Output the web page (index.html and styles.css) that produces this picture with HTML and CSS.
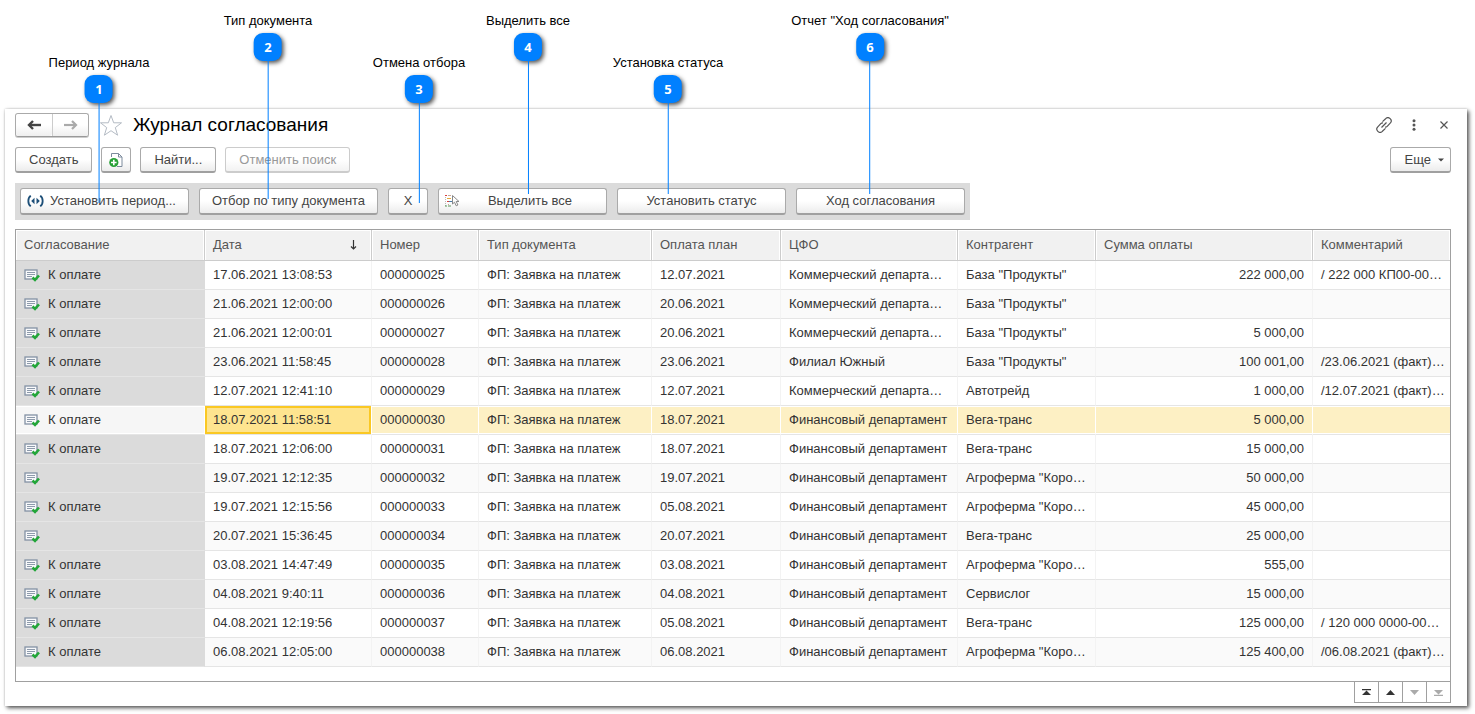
FILE: index.html
```html
<!DOCTYPE html>
<html lang="ru">
<head>
<meta charset="utf-8">
<title>Журнал согласования</title>
<link rel="stylesheet" href="styles.css">
</head>
<body>
<svg class="defs" aria-hidden="true">
  <symbol id="doc" viewBox="0 0 16 13">
    <rect x="1" y="1" width="12" height="9" fill="#f8f9fb" stroke="#8391a4" stroke-width="1.300"/>
    <path d="M3 3.500h8M3 5.500h8M3 7.500h5" stroke="#8d9aab"/>
    <path d="M8.500 8.500l2.500 2.400 4-4.400" fill="none" stroke="#22a638" stroke-width="2.600"/>
  </symbol>
</svg>

<main class="window">
  <header class="titlebar">
    <div class="history">
      <button type="button" aria-label="Назад"><svg width="14" height="10" viewBox="0 0 14 10"><path d="M2 5h12" stroke="#444" stroke-width="2.400"/><path d="M6 1L2 5l4 4" fill="none" stroke="#444" stroke-width="2.400"/></svg></button>
      <button type="button" aria-label="Вперед"><svg width="14" height="10" viewBox="0 0 14 10"><path d="M0 5h12" stroke="#aaa" stroke-width="2.200"/><path d="M8 1l4 4-4 4" fill="none" stroke="#aaa" stroke-width="2.200"/></svg></button>
    </div>
    <button type="button" class="plain star" aria-label="В избранное"><svg width="24" height="23" viewBox="0 0 24 23"><path d="M12 1.500l2.700 7.300h7.800l-6.200 4.800 2.300 7.600-6.600-4.500-6.600 4.500 2.300-7.600L1.500 8.800h7.800z" fill="#fff" stroke="#b4bbc4"/></svg></button>
    <h1>Журнал согласования</h1>
    <div class="tools">
      <button type="button" class="plain" aria-label="Ссылка"><svg width="16" height="16" viewBox="0 0 16 16"><g fill="none" stroke="#555" stroke-width="1.200"><path d="M6.500 4.600L9.600 1.700a3 3 0 0 1 4.600 4.500L11.200 9.300a2.800 2.800 0 0 1-2.200.8"/><path d="M9.500 11.400L6.400 14.300a3 3 0 0 1-4.600-4.500L4.800 6.700A2.800 2.800 0 0 1 7 5.900"/><path d="M5.500 10.500l5-5"/></g></svg></button>
      <button type="button" class="plain" aria-label="Меню"><svg width="4" height="12" viewBox="0 0 4 12"><g fill="#555"><circle cx="2" cy="1.800" r="1.500"/><circle cx="2" cy="6" r="1.500"/><circle cx="2" cy="10.200" r="1.500"/></g></svg></button>
      <button type="button" class="plain" aria-label="Закрыть"><svg width="8" height="8" viewBox="0 0 8 8"><path d="M0.500 0.500l7 7M7.500 0.500l-7 7" stroke="#555" stroke-width="1.200"/></svg></button>
    </div>
  </header>

  <div class="commands">
    <button type="button" class="btn">Создать</button>
    <button type="button" class="btn square" aria-label="Скопировать"><svg width="14" height="16" viewBox="0 0 14 16"><path d="M2.500 5V1.500h7l3.500 3.500v9.500H8" fill="#fff" stroke="#7d8b9d"/><path d="M9.500 1.500V5H13" fill="none" stroke="#7d8b9d"/><circle cx="4.800" cy="10.500" r="4.600" fill="#27a035"/><path d="M2 10.500h5.600M4.800 7.700v5.600" stroke="#fff" stroke-width="1.600"/></svg></button>
    <button type="button" class="btn">Найти...</button>
    <button type="button" class="btn" disabled>Отменить поиск</button>
    <button type="button" class="btn more">Еще <svg width="6" height="4" viewBox="0 0 6 4"><path d="M0 0.500h6L3 3.500z" fill="#444"/></svg></button>
  </div>

  <div class="filters">
    <button type="button" class="btn wide"><svg width="17" height="12" viewBox="0 0 17 12"><g fill="none" stroke="#1d4f78" stroke-width="1.800"><path d="M3.800 0.700C.5 3 .5 9 3.800 11.300M13.200 0.700c3.300 2.300 3.300 8.300 0 10.600"/></g><path d="M7.500 2.800v6.400L4.200 6zM9.500 2.800v6.400L12.800 6z" fill="#1d4f78"/></svg><span>Установить период...</span></button>
    <button type="button" class="btn type">Отбор по типу документа</button>
    <button type="button" class="btn reset">X</button>
    <button type="button" class="btn wide"><svg width="15" height="14" viewBox="0 0 15 14"><path d="M0 1.500h2" stroke="#d8403c"/><path d="M3 1.500h3M3 4.500h1M3 10.500h1" stroke="#c9a898"/><path d="M2 4.500h4" stroke="#e5a93a"/><path d="M0.500 3v9" stroke="#bbb" stroke-dasharray="1 1"/><path d="M2 7.500h2" stroke="#d8403c"/><path d="M4 7.500h3" stroke="#4a7ca8"/><path d="M0 12h2M3 12h3" stroke="#5c9a5c"/><path d="M7.500 1.500v8.500l2-1.800 1.700 3.600 1.700-.8-1.700-3.500H14z" fill="#fff" stroke="#888"/></svg><span>Выделить все</span></button>
    <button type="button" class="btn wide">Установить статус</button>
    <button type="button" class="btn wide">Ход согласования</button>
  </div>

  <div class="grid">
    <table>
      <colgroup><col class="c-state"><col class="c-date"><col class="c-num"><col class="c-type"><col class="c-plan"><col class="c-cfo"><col class="c-agent"><col class="c-sum"><col></colgroup>
      <thead>
        <tr><th>Согласование</th><th><div class="sorted">Дата<svg width="7" height="10" viewBox="0 0 7 10"><path d="M3.500 0v9M1 6.500l2.500 2.500L6 6.500" fill="none" stroke="#333" stroke-width="1.200"/></svg></div></th><th>Номер</th><th>Тип документа</th><th>Оплата план</th><th>ЦФО</th><th>Контрагент</th><th>Сумма оплаты</th><th>Комментарий</th></tr>
      </thead>
      <tbody id="rows"></tbody>
    </table>
  </div>
  <nav class="pager" aria-label="Прокрутка">
    <button type="button" aria-label="В начало"><svg width="9" height="7" viewBox="0 0 9 7"><path d="M0 0h9v1.300H0zM4.500 1.500L9 6H0z" fill="#333"/></svg></button>
    <button type="button" aria-label="Вверх"><svg width="9" height="7" viewBox="0 0 9 7"><path d="M4.500 1L9 6H0z" fill="#333"/></svg></button>
    <button type="button" disabled aria-label="Вниз"><svg width="9" height="7" viewBox="0 0 9 7"><path d="M4.500 6L9 1H0z" fill="#aaa"/></svg></button>
    <button type="button" disabled aria-label="В конец"><svg width="9" height="7" viewBox="0 0 9 7"><path d="M0 5.700h9V7H0zM4.500 5.500L9 1H0z" fill="#aaa"/></svg></button>
  </nav>
</main>

<div class="callout low n1"><span>Период журнала</span><b>1</b><i></i></div>
<div class="callout high n2"><span>Тип документа</span><b>2</b><i></i></div>
<div class="callout low n3"><span>Отмена отбора</span><b>3</b><i></i></div>
<div class="callout high n4"><span>Выделить все</span><b>4</b><i></i></div>
<div class="callout low n5"><span>Установка статуса</span><b>5</b><i></i></div>
<div class="callout high n6"><span>Отчет "Ход согласования"</span><b>6</b><i></i></div>
<script src="rows.js"></script>
</body>
</html>
```
FILE: rows.js
```js
const pay = 'К оплате', com = 'Коммерческий департа…', fin = 'Финансовый департамент';
const base = 'База "Продукты"', agro = 'Агроферма "Коро…', vega = 'Вега-транс';
const rows = [
  [pay, '17.06.2021 13:08:53', '25', '12.07.2021', com, base, '222 000,00', '/ 222 000 КП00-00…'],
  [pay, '21.06.2021 12:00:00', '26', '20.06.2021', com, base, '', ''],
  [pay, '21.06.2021 12:00:01', '27', '20.06.2021', com, base, '5 000,00', ''],
  [pay, '23.06.2021 11:58:45', '28', '23.06.2021', 'Филиал Южный', base, '100 001,00', '/23.06.2021 (факт)…'],
  [pay, '12.07.2021 12:41:10', '29', '12.07.2021', com, 'Автотрейд', '1 000,00', '/12.07.2021 (факт)…'],
  [pay, '18.07.2021 11:58:51', '30', '18.07.2021', fin, vega, '5 000,00', ''],
  [pay, '18.07.2021 12:06:00', '31', '18.07.2021', fin, vega, '15 000,00', ''],
  ['', '19.07.2021 12:12:35', '32', '19.07.2021', fin, agro, '50 000,00', ''],
  [pay, '19.07.2021 12:15:56', '33', '05.08.2021', fin, agro, '45 000,00', ''],
  ['', '20.07.2021 15:36:45', '34', '20.07.2021', fin, vega, '25 000,00', ''],
  [pay, '03.08.2021 14:47:49', '35', '03.08.2021', fin, agro, '555,00', ''],
  [pay, '04.08.2021 9:40:11', '36', '04.08.2021', fin, 'Сервислог', '15 000,00', ''],
  [pay, '04.08.2021 12:19:56', '37', '05.08.2021', fin, vega, '125 000,00', '/ 120 000 0000-00…'],
  [pay, '06.08.2021 12:05:00', '38', '06.08.2021', fin, agro, '125 400,00', '/06.08.2021 (факт)…']
];
document.getElementById('rows').innerHTML = rows.map(([state, date, num, plan, cfo, agent, sum, note]) =>
  `<tr${num === '30' ? ' class="current"' : ''}><td class="state"><svg width="16" height="13"><use href="#doc"/></svg>${state}</td>` +
  `<td class="date">${date}</td><td>0000000${num}</td><td>ФП: Заявка на платеж</td><td>${plan}</td>` +
  `<td>${cfo}</td><td>${agent}</td><td class="sum">${sum}</td><td>${note}</td></tr>`
).join('');
```
FILE: styles.css
```css
* { box-sizing: border-box; }
body {
  margin: 0;
  padding: 109px 8px 8px 5px;
  background: #fff;
  color: #333;
  font: 13px/16px "Liberation Sans", Arial, sans-serif;
}
button { font: inherit; color: #444; margin: 0; padding: 0; }
svg { flex: none; }
.defs { position: absolute; width: 0; height: 0; }

.window {
  padding: 4px 16px 3px 10px;
  background: #fff;
  box-shadow: 2px 2px 4px #555, 0 0 2px #ccc;
}
.titlebar { display: flex; align-items: center; height: 24px; }
.history { display: flex; border: 1px solid #aaa; border-bottom-color: #999; border-radius: 3px; box-shadow: 0 1px 0 #ccc; }
.history button {
  display: flex; align-items: center; justify-content: center;
  width: 36px; height: 22px; border: 0; border-radius: 3px;
  background: linear-gradient(#fff 50%, #eee);
}
.history button + button { border-left: 1px solid #ccc; border-radius: 0 3px 3px 0; }
.plain { display: flex; align-items: center; justify-content: center; border: 0; background: none; }
.star { margin: 0 10px; }
h1 { margin: 0; font-size: 19px; line-height: 24px; font-weight: 400; color: #000; }
.tools { display: flex; margin-left: auto; margin-right: -8px; }
.tools button { width: 30px; height: 24px; }

.commands { display: flex; gap: 9px; margin-top: 10px; }
.btn {
  display: flex; align-items: center; justify-content: center;
  height: 26px; padding: 0 13px;
  border: 1px solid #aaa; border-bottom: 2px solid #a0a0a0; border-radius: 3px;
  background: linear-gradient(#fff 50%, #ececec);
  white-space: nowrap;
}
.btn:disabled { color: #999; border-color: #ccc; background: linear-gradient(#fff 50%, #f2f2f2); }
.square { width: 30px; padding: 0; }
.more { margin-left: auto; gap: 7px; padding: 0 6px 0 14px; }

.filters { display: flex; gap: 10px; width: fit-content; margin-top: 10px; padding: 5px; background: #dbdbdb; }
.filters .btn { height: 27px; }
.filters .wide { width: 169px; padding: 0 6px; }
.wide span { flex: 1; text-align: center; }
.filters .type { width: 179px; padding: 0; }
.filters .reset { width: 40px; padding: 0; }

.grid { margin-top: 9px; padding-bottom: 14px; border: 1px solid #a0a0a0; }
table { width: 100%; table-layout: fixed; border-collapse: separate; border-spacing: 0; }
.c-state { width: 189px; }
.c-date { width: 167px; }
.c-num { width: 107px; }
.c-type { width: 173px; }
.c-plan { width: 129px; }
.c-cfo { width: 177px; }
.c-agent { width: 138px; }
.c-sum { width: 217px; }
th, td { padding: 0 8px; text-align: left; font-weight: 400; white-space: nowrap; overflow: hidden; text-overflow: ellipsis; }
th {
  height: 31px; color: #555; background: #f1f1f1;
  border-right: 1px solid #ccc; border-bottom: 1px solid #ccc;
  box-shadow: inset 1px 1px #fff, inset -1px 0 #fff;
}
th:last-child { border-right: 0; }
.sorted { display: flex; align-items: center; justify-content: space-between; padding-right: 6px; }
td { height: 29px; border-right: 1px solid #f3f3f3; border-bottom: 1px solid #e5e5e5; }
td:last-child { padding-right: 2px; border-right: 0; }
tr:nth-child(even) td { background: #fafafa; }
tbody tr .state { background: #dbdbdb; border-right-color: #dbdbdb; }
tbody tr:nth-child(even) .state { background: #dbdbdb; }
.state svg { margin-right: 8px; vertical-align: middle; }
.sum { text-align: right; }
tbody tr.current td { background: #fdf0c4; border-right-color: #fff; box-shadow: inset 0 1px #fff, inset 0 -1px #fff; }
tbody tr.current .state { background: #f6f6f6; }
tbody tr.current .date { background: #fee48f; box-shadow: inset 0 0 0 2px #fac823; }

.pager { display: flex; width: fit-content; margin-left: auto; border: solid #a0a0a0; border-width: 0 1px 1px 0; }
.pager button {
  display: flex; align-items: center; justify-content: center;
  width: 24px; height: 20px; border: 0; border-left: 1px solid #a0a0a0; background: #fff;
}

/* Numbered callouts drawn over the window */
.callout {
  position: absolute; display: flex; flex-direction: column; align-items: center;
  transform: translateX(-50%); color: #000; white-space: nowrap; pointer-events: none;
}
.high { top: 13px; }
.low { top: 55px; }
.callout b {
  width: 28px; height: 28px; margin-top: 4px; border-radius: 9px;
  background: #0080ff; color: #fff; text-align: center;
  font: 700 13px/28px "Noto Sans", "Open Sans", sans-serif;
  box-shadow: 2px 2px 4px #555;
}
.callout i { width: 1px; height: 100px; background: #0080ff; }
.high i { height: 138px; }
.n1 { left: 99px; }
.n2 { left: 268px; }
.n3 { left: 419px; }
.n4 { left: 528px; }
.n5 { left: 668px; }
.n6 { left: 870px; }
.n4 i, .n6 i { height: 133px; }
.n5 i { height: 91px; }
```
